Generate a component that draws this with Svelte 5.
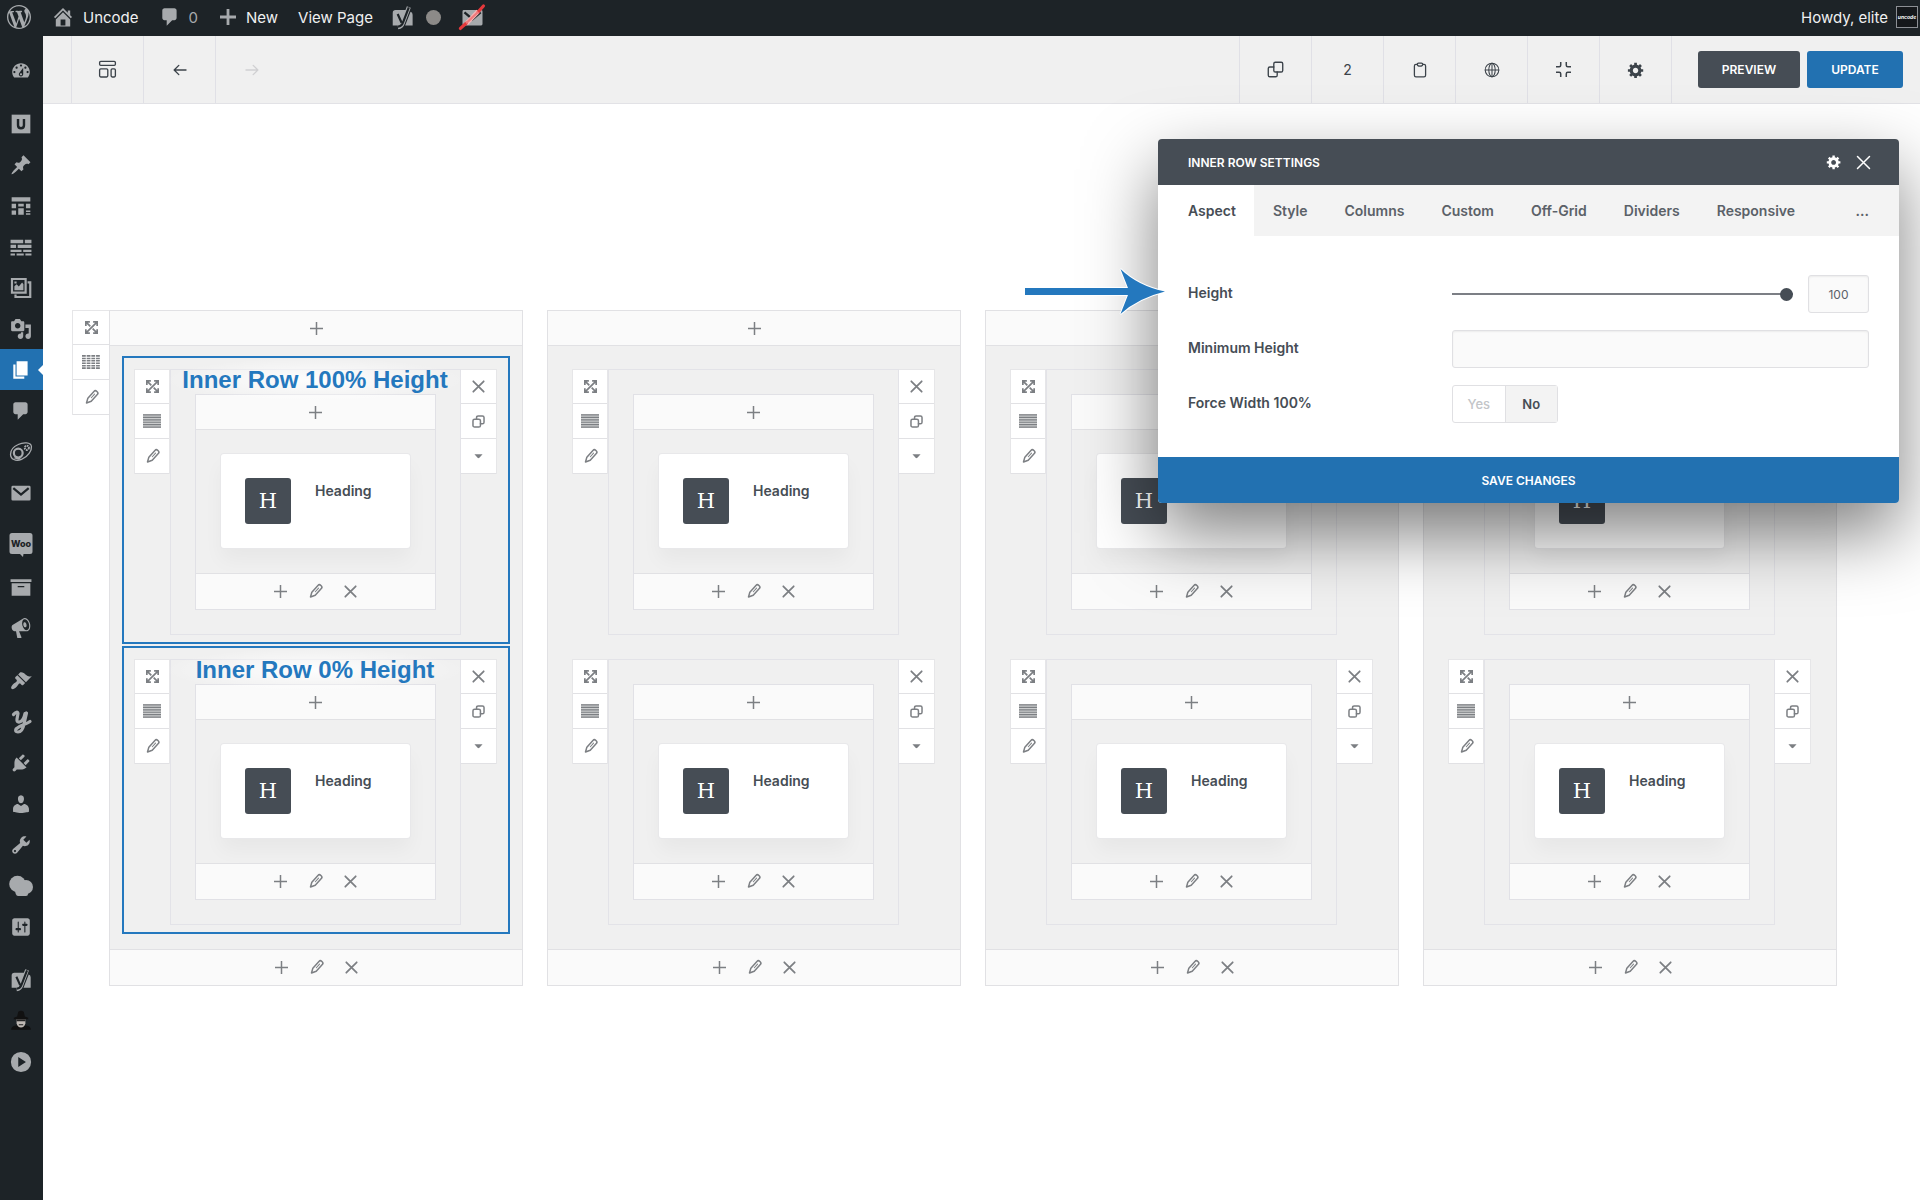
<script lang="ts">
  type Box = '20' | '24';
  interface Icon { box: Box; body: string; }

  const solid = (d: string): Icon => ({ box: '20', body: `<path fill="currentColor" fill-rule="evenodd" d="${d}"/>` });
  const line = (body: string, w = 1.6): Icon => ({
    box: '20',
    body: `<g fill="none" stroke="currentColor" stroke-width="${w}" stroke-linecap="round" stroke-linejoin="round">${body}</g>`,
  });

  const gear = 'M18 12h-2.18c-.17.7-.44 1.35-.81 1.93l1.54 1.54-2.1 2.1-1.54-1.54c-.58.36-1.23.63-1.91.79V19H8v-2.18c-.68-.16-1.33-.43-1.91-.79l-1.54 1.54-2.12-2.12 1.54-1.54c-.36-.58-.63-1.23-.79-1.91H1V9.03h2.17c.16-.7.44-1.35.8-1.94L2.43 5.55l2.1-2.1 1.54 1.54c.58-.37 1.24-.64 1.93-.81V2h3v2.18c.68.16 1.33.43 1.91.79l1.54-1.54 2.12 2.12-1.54 1.54c.36.59.64 1.24.8 1.94H18V12zm-8.5 1.5c1.66 0 3-1.34 3-3s-1.34-3-3-3-3 1.34-3 3 1.34 3 3 3z';
  const envelope = '<path fill="currentColor" d="M2.500 3.500h15q1.200 0 1.200 1.200v11q0 1.200-1.200 1.200h-15q-1.200 0-1.200-1.200v-11q0-1.200 1.200-1.200z"/><path fill="none" stroke="#1d2327" stroke-width="2" d="M3 5.500l7 6 7-6"/>';
  const yoast = '<path fill="currentColor" d="M4 3.500h9.500L9.500 17H1.500V6Q1.500 3.500 4 3.500zM17 5q1.800.5 1.800 2.500V17h-6.500z"/><path fill="none" stroke="currentColor" stroke-width="3.600" d="M15.500.8l-5 13.400q-1.200 3.800-4.500 4.200"/><path fill="none" stroke="#1d2327" stroke-width="1.900" d="M5.800 7l3.400 7.500M15.500 1.200l-5 13q-1.200 3.400-4.500 3.800"/>';

  const icons: Record<string, Icon> = {
    wordpress: solid('M20 10c0-5.51-4.49-10-10-10C4.48 0 0 4.49 0 10c0 5.52 4.48 10 10 10 5.51 0 10-4.48 10-10zM7.78 15.37L4.37 6.22c.55-.02 1.17-.08 1.17-.08.5-.06.44-1.13-.06-1.11 0 0-1.45.11-2.37.11-.18 0-.37 0-.58-.01C4.12 2.69 6.87 1.11 10 1.11c2.33 0 4.45.87 6.05 2.34-.68-.11-1.65.39-1.65 1.58 0 .74.45 1.36.9 2.1.35.61.55 1.36.55 2.46 0 1.49-1.4 5-1.4 5l-3.03-8.37c.54-.02.82-.17.82-.17.5-.05.44-1.25-.06-1.22 0 0-1.44.12-2.38.12-.87 0-2.33-.12-2.33-.12-.5-.03-.56 1.2-.06 1.22l.92.08 1.26 3.41zM17.41 10c.24-.64.74-1.87.43-4.25.7 1.29 1.05 2.71 1.05 4.25 0 3.29-1.73 6.24-4.4 7.78.97-2.59 1.94-5.2 2.92-7.78zM6.1 18.09C3.12 16.65 1.11 13.53 1.11 10c0-1.3.23-2.48.72-3.59C3.25 10.3 4.67 14.2 6.1 18.09zm4.03-6.63l2.58 6.98c-.86.29-1.76.45-2.71.45-.79 0-1.57-.11-2.29-.33.81-2.38 1.62-4.74 2.42-7.1z'),
    home: solid('M16 8.5l1.53 1.53-1.06 1.06L10 4.6l-6.47 6.49-1.06-1.06L10 2.5l4 4v-2h2v4zm-6-2.46l6 5.99V18H4v-5.97zM12 17v-5H8v5h4z'),
    comment: solid('M5 2h9c1.1 0 2 .9 2 2v7c0 1.1-.9 2-2 2h-2l-5 5v-5H5c-1.1 0-2-.9-2-2V4c0-1.1.9-2 2-2z'),
    add: solid('M18 8.600v2.800h-6.600V18H8.600v-6.600H2V8.600h6.600V2h2.800v6.600z'),
    yoast: { box: '20', body: yoast },
    mailOff: { box: '20', body: envelope + '<path stroke="#f6b5b6" stroke-width="3.800" d="M4.500 15.500l10.500-11"/><path stroke="#e5383b" stroke-width="2.800" stroke-linecap="round" d="M-.5 19.500L4.500 15M15 5L19.500 0"/><path stroke="#ef7a7c" stroke-width="2" d="M4.500 15L15 5"/>' },
    dashboard: solid('M3.76 16h12.48c1.1-1.37 1.76-3.11 1.76-5 0-4.42-3.58-8-8-8s-8 3.58-8 8c0 1.89.66 3.63 1.76 5zM10 4c.55 0 1 .45 1 1s-.45 1-1 1-1-.45-1-1 .45-1 1-1zM6 6c.55 0 1 .45 1 1s-.45 1-1 1-1-.45-1-1 .45-1 1-1zm8 0c.55 0 1 .45 1 1s-.45 1-1 1-1-.45-1-1 .45-1 1-1zm-5.37 5.55L12 7v6c0 1.1-.9 2-2 2s-2-.9-2-2c0-.57.24-1.08.63-1.45zM4 10c.55 0 1 .45 1 1s-.45 1-1 1-1-.45-1-1 .45-1 1-1zm12 0c.55 0 1 .45 1 1s-.45 1-1 1-1-.45-1-1 .45-1 1-1zm-5 3c0-.55-.45-1-1-1s-1 .45-1 1 .45 1 1 1 1-.45 1-1z'),
    uncode: { box: '20', body: '<path fill="currentColor" d="M1.500 1.500h17v17h-17z"/><path fill="none" stroke="#1d2327" stroke-width="2.200" d="M7.300 5.500v5.700q0 2.700 2.700 2.700t2.700-2.700V5.500"/>' },
    pin: solid('M10.44 3.02l1.82-1.82 6.36 6.35-1.83 1.82c-1.05-.68-2.48-.57-3.41.36l-.75.75c-.92.93-1.04 2.35-.35 3.41l-1.83 1.82-2.41-2.41-2.8 2.79c-.42.42-3.38 2.71-3.8 2.29s1.86-3.39 2.28-3.81l2.79-2.79L4.1 9.36l1.83-1.82c1.05.69 2.48.57 3.4-.36l.75-.75c.93-.92 1.05-2.35.36-3.41z'),
    grid: solid('M1.500 2h17v4h-17zM1.500 8h4v4h-4zM7.500 8h5v2.500h-5zM14.500 8h4v4h-4zM1.500 14h4v4h-4zM7.500 12h5v6h-5zM14.500 14h4v1.500h-4zM14.500 16.500h4V18h-4z'),
    bricks: solid('M.5 3.500h11.500v3H.5zM13.500 3.500h6v3h-6zM.5 8h5v3h-5zM7 8h12.500v3H7zM.5 12.500h10v2H.5zM12 12.500h7.500v2H12zM.5 16h4v1.800h-4zM6 16h6.500v1.800H6zM14 16h5.500v1.800H14z'),
    gallery: { box: '20', body: '<path fill="none" stroke="currentColor" stroke-width="2" d="M1.800 1.800h12.400v12.400H1.800zM16 4.800h2.400v13.400H5V16"/><path fill="currentColor" d="M4 12V8.500l2-1.800 2 2L11 5l1.200 1.500V12zM4 4h2v2H4z"/>' },
    media: solid('M13 11V4c0-.55-.45-1-1-1h-1.67L9 1H5L3.67 3H2c-.55 0-1 .45-1 1v7c0 .55.45 1 1 1h10c.55 0 1-.45 1-1zM7 4.5c1.38 0 2.5 1.12 2.5 2.5S8.38 9.5 7 9.5 4.5 8.38 4.5 7 5.62 4.5 7 4.5zM14 6h5v10.5c0 1.38-1.12 2.5-2.5 2.5S14 17.88 14 16.5s1.12-2.5 2.5-2.500c.17 0 .34.02.5.05V9h-3V6zm-4 8.05V13h2v3.5c0 1.380-1.120 2.500-2.500 2.500S7 17.880 7 16.500 8.120 14 9.500 14c.170 0 .340.020.500.050z'),
    pages: solid('M6 15V2h10v13H6zm-1 1h8v2H3V5h2v11z'),
    planet: { box: '20', body: '<g fill="none" stroke="currentColor"><path stroke-width="1.200" d="M7.500 3.200C12 1 19 1 19.500 5c.4 3.500-3 9.500-9 11.800C5 18.800.5 16.500.5 12c0-4 3-7 7-8.800z"/><circle cx="7.500" cy="11" r="4" stroke-width="2"/><circle cx="15.300" cy="6.200" r="1.900" stroke-width="1.800" stroke-dasharray="1.400 .6"/></g><path fill="currentColor" d="M3 15.500l3-1 4 1.500-2.500 1z"/>' },
    mail: { box: '20', body: envelope },
    woo: { box: '24', body: '<path fill="currentColor" d="M3-1h18q2.500 0 2.500 2.500v16q0 2.500-2.500 2.500h-6.500l-.5 3-3-3H3Q.5 20 .5 17.500v-16Q.5-1 3-1z"/><text x="12" y="13" text-anchor="middle" font-family="Inter, sans-serif" font-size="9" font-weight="800" fill="#1d2327">Woo</text>' },
    archive: solid('M.5 3h19v2.500H.5zM1.500 6.500h17V18h-17zM7 9v1.200h6V9z'),
    megaphone: solid('M18.15 5.94c.46 1.62.38 3.22-.02 4.48-.42 1.28-1.26 2.18-2.3 2.48-.16.06-.26.06-.4.06-.06.02-.12.02-.18.02-.06.02-.14.02-.22.02h-6.8l2.22 5.5c.02.14-.06.26-.14.34-.08.1-.24.16-.34.16H6.95c-.1 0-.26-.06-.34-.16-.08-.08-.16-.2-.14-.34l-1-5.5H4.25l-.02-.02c-.5.06-1.08-.18-1.54-.62s-.88-1.08-1.06-1.88c-.24-.8-.2-1.56-.02-2.2.18-.62.58-1.08 1.06-1.3l.02-.02 9-5.4c.1-.06.18-.1.24-.16.06-.04.14-.08.24-.12.16-.08.28-.12.5-.18 1.04-.3 2.24.1 3.22.98s1.84 2.24 2.26 3.86zm-2.58 5.98h-.02c.4-.1.74-.34 1.04-.7.58-.7.86-1.76.86-3.04 0-.64-.1-1.3-.28-1.98-.34-1.36-1.02-2.5-1.78-3.24s-1.68-1.1-2.46-.88c-.82.22-1.4.96-1.7 2-.32 1.04-.28 2.36.06 3.72.38 1.36 1 2.5 1.8 3.24.78.74 1.62 1.1 2.48.88zm-2.54-7.08c.22-.04.42-.02.62.04.38.16.76.48 1.02 1s.42 1.2.42 1.78c0 .3-.04.56-.12.8-.18.48-.44.84-.86.94-.34.1-.8-.06-1.14-.4s-.64-.86-.78-1.5c-.18-.62-.12-1.24.02-1.72s.48-.84.82-.94z'),
    brush: solid('M14.48 11.06L7.41 3.99l1.5-1.5c.5-.56 2.3-.47 3.51.32 1.21.8 1.43 1.28 2.91 2.1 1.18.64 2.45 1.26 4.45.85zm-.71.71L6.7 4.7 4.93 6.47c-.39.39-.39 1.02 0 1.41l1.06 1.06c.39.39.39 1.03 0 1.42-.6.6-1.43 1.11-2.21 1.69-.35.26-.7.53-1.01.84C1.43 14.23.4 16.08 1.4 17.07c.99 1 2.84-.03 4.18-1.36.31-.31.58-.66.85-1.02.57-.78 1.08-1.61 1.69-2.21.39-.39 1.02-.39 1.41 0l1.06 1.06c.39.39 1.02.39 1.41 0z'),
    script: { box: '24', body: '<g fill="none" stroke="currentColor" stroke-width="3.200" stroke-linecap="round" stroke-linejoin="round"><path d="M4.500 4.500Q8.500.5 9 3.500L8 9q-.5 3.500 2.500 3 4-1 5.500-8.500M17.500 3L15 14q-1.500 8-6 8-3.500-.3-2-3 2.500-2.500 8-4.500 4-1.500 6-3"/></g>' },
    plug: solid('M13.11 4.36L9.87 7.6 8 5.73l3.24-3.24c.35-.34 1.05-.2 1.56.32.52.51.66 1.21.31 1.55zm-8 1.77l.91-1.12 9.01 9.01-1.19.84c-.71.71-2.63 1.16-3.82 1.16H6.14L4.9 17.26c-.59.59-1.54.59-2.12 0-.59-.58-.59-1.53 0-2.12l1.24-1.24v-3.88c0-1.13.4-3.19 1.09-3.89zm7.26 3.97l3.24-3.24c.34-.35 1.04-.21 1.55.31.52.51.66 1.21.31 1.55l-3.24 3.25z'),
    user: solid('M10 9.25c-2.27 0-2.73-3.44-2.73-3.44C7 4.02 7.82 2 9.97 2c2.16 0 2.98 2.02 2.71 3.81 0 0-.41 3.44-2.68 3.44zm0 2.57L12.72 10c2.39 0 4.52 2.33 4.52 4.53v2.49s-3.65 1.13-7.24 1.13c-3.65 0-7.24-1.13-7.24-1.13v-2.49c0-2.25 1.94-4.48 4.47-4.48z'),
    wrench: solid('M16.68 9.77c-1.34 1.34-3.3 1.67-4.95.99l-5.41 6.52c-.99.99-2.59.99-3.58 0s-.99-2.59 0-3.57l6.52-5.42c-.68-1.65-.35-3.61.99-4.95 1.28-1.28 3.12-1.62 4.72-1.06l-2.89 2.89 2.82 2.82 2.86-2.87c.53 1.58.18 3.39-1.08 4.65zM3.81 16.21c.4.39 1.04.39 1.43 0 .4-.4.4-1.04 0-1.43-.39-.4-1.03-.4-1.43 0-.39.39-.39 1.03 0 1.43z'),
    cloud: { box: '24', body: '<g fill="currentColor"><circle cx="8.500" cy="10" r="8.300"/><circle cx="17" cy="13" r="7"/><path d="M6 14h13v6q0 2-2 2H9q-3 0-3-8z"/></g>' },
    settings: solid('M18 16V4c0-1.1-.9-2-2-2H4c-1.1 0-2 .9-2 2v12c0 1.1.9 2 2 2h12c1.1 0 2-.9 2-2zM8 11h1c.55 0 1 .45 1 1s-.45 1-1 1H8v1.5c0 .28-.22.5-.5.5s-.5-.22-.5-.5V13H6c-.55 0-1-.45-1-1s.45-1 1-1h1V5.5c0-.28.22-.5.5-.5s.5.22.5.5V11zm5-2h-1c-.55 0-1-.45-1-1s.45-1 1-1h1V5.5c0-.28.22-.5.5-.5s.5.22.5.5V7h1c.55 0 1 .45 1 1s-.45 1-1 1h-1v5.5c0 .28-.22.5-.5.5s-.5-.22-.5-.5V9z'),
    agent: { box: '20', body: '<path fill="#111" d="M6.500 6L7.500 1.500q2.500-1.500 5 0L13.500 6l3 1v1.500h-13V7zM1 18q0-3.500 4-4h10q4 .5 4 4z"/><path fill="#bfb9b4" d="M6 8.500h8V12q-1 4-4 4t-4-4z"/><path fill="#222" d="M6 8.500h8v1.800H6zM8 13h4v.8H8z"/>' },
    play: solid('M10 .8a9.200 9.200 0 1 0 0 18.400A9.200 9.200 0 1 0 10 .8zM7.500 5.500l7 4.500-7 4.500z'),

    layout: line('<rect x="1.700" y="1.500" width="16.600" height="4.200" rx="1.200"/><rect x="1.700" y="9.300" width="8.600" height="8.600" rx="1.200"/><rect x="13.800" y="9.300" width="4.500" height="8.600" rx="1.200"/>', 1.4),
    back: line('<path d="M17.500 10H3M8.500 4.200L2.700 10l5.800 5.800"/>', 1.7),
    forward: line('<path d="M2.500 10H17M11.500 4.200l5.800 5.800-5.800 5.800"/>', 1.7),
    clone: line('<rect x="8" y="1.500" width="10.500" height="11.500" rx="1.800"/><path d="M8 7H3.300q-1.800 0-1.800 1.800v7.900q0 1.800 1.800 1.800h6.900q1.800 0 1.800-1.800V13"/>', 1.6),
    clipboard: line('<path d="M6.500 3H5Q3 3 3 5v11.500q0 2 2 2h10q2 0 2-2V5q0-2-2-2h-1.500M6.500 3q0-1.700 1.700-1.700h3.600q1.700 0 1.700 1.700-.3 2.200-3.500 2.200T6.500 3z"/>', 1.6),
    globe: line('<circle cx="10" cy="10" r="8.500"/><ellipse cx="10" cy="10" rx="4" ry="8.500"/><path d="M1.500 10h17M10 1.500v17"/>', 1.3),
    compress: { box: '20', body: '<path fill="none" stroke="currentColor" stroke-width="2" d="M6.300 0v4.300q0 2-2 2H0M13.700 0v4.300q0 2 2 2H20M6.300 20v-4.300q0-2-2-2H0M13.700 20v-4.300q0-2 2-2H20"/>' },
    gear: { box: '20', body: `<path fill="currentColor" fill-rule="evenodd" d="${gear}"/>` },

    expand: { box: '20', body: '<path fill="none" stroke="currentColor" stroke-width="2.600" d="M2 2l6.200 6.200M18 2L2 18M11.800 11.800L18 18M1.300 7.500V1.300h6.200M12.500 1.300h6.200v6.200M18.700 12.500v6.200h-6.200M7.500 18.700H1.300v-6.200"/>' },
    pencil: { box: '20', body: '<g transform="rotate(42 10 10)" fill="none" stroke="currentColor" stroke-linejoin="round" stroke-linecap="round"><path stroke-width="2.300" d="M6.500 0q0-2.500 3.500-2.500T13.500 0v14.500L10 21.500l-3.500-7z"/><path stroke-width="1.500" d="M10 3v7.500"/></g>' },
    plus: { box: '20', body: '<path stroke="currentColor" stroke-width="2.300" d="M0 10h20M10 0v20"/>' },
    close: line('<path d="M2 2l16 16M18 2L2 18"/>', 2.7),
    closeThin: line('<path d="M2 2l16 16M18 2L2 18"/>', 2),
    copy: line('<rect x="1.500" y="6.500" width="11.500" height="12" rx="2.500"/><path d="M7 6V4q0-2.500 2.500-2.500H16q2.500 0 2.500 2.500v7q0 2.500-2.500 2.500h-3"/>', 2.3),
    caret: solid('M1 5h18l-7 8q-2 1.500-4 0z'),
    // column layouts: one striped block, or four of them
    rows1: { box: '20', body: '<path fill="currentColor" fill-opacity=".4" d="M0 2.500h20v15H0z"/><path fill="none" stroke="currentColor" stroke-width="1.300" d="M0 3.200h20M0 6h20M0 8.700h20M0 11.400h20M0 14.100h20M0 16.800h20"/>' },
    rows4: { box: '20', body: '<path fill="none" stroke="currentColor" stroke-width="1.700" stroke-dasharray="4.200 1" d="M0 3.200h20M0 6h20M0 8.700h20M0 11.400h20M0 14.100h20M0 16.800h20"/>' },
  };

  const menu = [
    ['dashboard'],
    ['uncode', 'pin', 'grid', 'bricks', 'gallery', 'media', 'pages', 'comment', 'planet', 'mail'],
    ['woo', 'archive', 'megaphone'],
    ['brush', 'script', 'plug', 'user', 'wrench', 'cloud', 'settings'],
    ['yoast', 'agent', 'play'],
  ];

  const tabs = ['Aspect', 'Style', 'Columns', 'Custom', 'Off-Grid', 'Dividers', 'Responsive'];

  const columns = [
    ['Inner Row 100% Height', 'Inner Row 0% Height'],
    ['', ''],
    ['', ''],
    ['', ''],
  ];

  let activeMenu = 'pages';
  let activeTab = 'Aspect';
  let height = 100;
  let minHeight = '';
  let forceWidth = 'no';
</script>

{#snippet icon(name: string, size: number)}
  <svg width={size} height={size} viewBox="0 0 {icons[name].box} {icons[name].box}" overflow="visible" aria-hidden="true">
    {@html icons[name].body}
  </svg>
{/snippet}

{#snippet tools()}
  <div class="bar bottom">
    <button aria-label="Add">{@render icon('plus', 13)}</button>
    <button aria-label="Edit">{@render icon('pencil', 13)}</button>
    <button aria-label="Delete">{@render icon('close', 13)}</button>
  </div>
{/snippet}

<header class="adminbar">
  <a href="#wp" class="wp" aria-label="WordPress">{@render icon('wordpress', 24)}</a>
  <a href="#home">{@render icon('home', 24)}<span>Uncode</span></a>
  <a href="#comments" class="dim">{@render icon('comment', 22)}<span>0</span></a>
  <a href="#new">{@render icon('add', 20)}<span>New</span></a>
  <a href="#view"><span>View Page</span></a>
  <a href="#seo" class="seo" aria-label="SEO">{@render icon('yoast', 23)}<i class="dot"></i></a>
  <a href="#mail" aria-label="Mail disabled">{@render icon('mailOff', 23)}</a>
  <a href="#profile" class="howdy"><span>Howdy, elite</span><i class="avatar">uncode</i></a>
</header>

<div class="layout">
  <nav class="sidebar" aria-label="Admin menu">
    {#each menu as group}
      <div class="group">
        {#each group as name}
          <a href="#{name}" class:active={activeMenu === name} aria-label={name}
             on:click|preventDefault={() => (activeMenu = name)}>
            {@render icon(name, name === 'woo' || name === 'cloud' || name === 'script' ? 24 : 22)}
          </a>
        {/each}
      </div>
    {/each}
  </nav>

  <main>
    <div class="toolbar">
      <span class="stub"></span>
      <button class="cell" aria-label="Layouts">{@render icon('layout', 19)}</button>
      <button class="cell" aria-label="Undo">{@render icon('back', 16)}</button>
      <button class="cell" aria-label="Redo" disabled>{@render icon('forward', 16)}</button>
      <div class="right">
        <button class="cell" aria-label="Clone">{@render icon('clone', 17)}</button>
        <button class="cell">2</button>
        <button class="cell" aria-label="Clipboard">{@render icon('clipboard', 16)}</button>
        <button class="cell" aria-label="Language">{@render icon('globe', 16)}</button>
        <button class="cell" aria-label="Compress">{@render icon('compress', 15)}</button>
        <button class="cell" aria-label="Settings">{@render icon('gear', 18)}</button>
      </div>
      <button class="btn dark">PREVIEW</button>
      <button class="btn blue">UPDATE</button>
    </div>

    <div class="row">
      <div class="handle outer">
        <button aria-label="Move row">{@render icon('expand', 13)}</button>
        <button aria-label="Row layout">{@render icon('rows4', 18)}</button>
        <button aria-label="Edit row">{@render icon('pencil', 13)}</button>
      </div>

      <div class="columns">
        {#each columns as col}
          <section class="column">
            <div class="bar"><button aria-label="Add">{@render icon('plus', 13)}</button></div>
            <div class="rows">
              {#each col as label}
                <div class="inner-row">
                  <div class="handle">
                    <button aria-label="Move inner row">{@render icon('expand', 13)}</button>
                    <button aria-label="Inner row layout">{@render icon('rows1', 18)}</button>
                    <button aria-label="Edit inner row">{@render icon('pencil', 13)}</button>
                  </div>
                  <div class="frame">
                    <div class="inner-column">
                      <div class="bar"><button aria-label="Add">{@render icon('plus', 13)}</button></div>
                      <div class="drop">
                        <article class="card">
                          <span class="tile">H</span>
                          <h3>Heading</h3>
                        </article>
                      </div>
                      {@render tools()}
                    </div>
                  </div>
                  <div class="handle end">
                    <button aria-label="Remove">{@render icon('close', 13)}</button>
                    <button aria-label="Duplicate">{@render icon('copy', 13)}</button>
                    <button aria-label="More">{@render icon('caret', 9)}</button>
                  </div>
                  {#if label}
                    <div class="mark"><strong>{label}</strong></div>
                  {/if}
                </div>
              {/each}
            </div>
            {@render tools()}
          </section>
        {/each}
      </div>
    </div>
  </main>
</div>

<!-- Settings window -->
<div class="modal" role="dialog" aria-labelledby="modal-title">
  <div class="modal-head">
    <h2 id="modal-title">INNER ROW SETTINGS</h2>
    <button aria-label="Options">{@render icon('gear', 16)}</button>
    <button aria-label="Close">{@render icon('closeThin', 15)}</button>
  </div>
  <div class="tabs" role="tablist">
    {#each tabs as tab}
      <button role="tab" aria-selected={activeTab === tab} class:active={activeTab === tab}
              on:click={() => (activeTab = tab)}>{tab}</button>
    {/each}
    <button class="more" aria-label="More tabs">...</button>
  </div>
  <div class="fields">
    <label for="height">Height</label>
    <div class="control">
      <input id="height" type="range" min="0" max="100" bind:value={height} />
      <input class="num" type="text" aria-label="Height value" bind:value={height} />
    </div>

    <label for="min-height">Minimum Height</label>
    <input id="min-height" class="text" type="text" bind:value={minHeight} />

    <span id="force-label">Force Width 100%</span>
    <div class="switch" role="radiogroup" aria-labelledby="force-label">
      <label class:on={forceWidth === 'yes'}><input type="radio" name="force" value="yes" bind:group={forceWidth} />Yes</label>
      <label class:on={forceWidth === 'no'}><input type="radio" name="force" value="no" bind:group={forceWidth} />No</label>
    </div>
  </div>
  <button class="save">SAVE CHANGES</button>

  <svg class="arrow" width="140" height="46" viewBox="0 0 140 46" aria-hidden="true">
    <path d="M0 19h103L95.500 0Q113 17 140 22.500 113 29 95.500 45L103 26H0z" fill="#2478be" stroke="#fff" stroke-width="2" paint-order="stroke" />
  </svg>
</div>

<style>
  :global(body) { background: #fff; }
  :global(#app) { position: relative; font-family: Inter, sans-serif; color: #464d55; }
  :global(#app *) { box-sizing: border-box; }

  button { border: 0; padding: 0; background: none; font: inherit; color: inherit; cursor: pointer; }
  a { color: inherit; text-decoration: none; }
  svg { display: block; flex: none; }
  h2, h3 { margin: 0; }

  /* Admin bar */
  .adminbar {
    display: flex; align-items: center; gap: 20px; height: 36px; padding: 0 2px 2px 7px;
    background: #1d2327; color: #a7aaad; font-size: 15px;
  }
  .adminbar a { display: flex; align-items: center; gap: 8px; }
  .adminbar span { color: #f0f0f1; }
  .adminbar .dim span { color: #a7aaad; }
  .adminbar .seo { margin-left: -2px; }
  .adminbar .howdy { margin-left: auto; }
  .dot { width: 15px; height: 15px; margin-left: 4px; border-radius: 50%; background: #8c8a88; }
  .avatar {
    display: flex; align-items: center; justify-content: center; width: 22px; height: 22px;
    border: 1px solid #8c8f94; background: #15181b; color: #fff; font-size: 5px; font-weight: 700;
  }

  .layout { display: flex; min-height: calc(100vh - 36px); }
  .sidebar {
    display: flex; flex-direction: column; gap: 12px; flex: 0 0 43px; padding-top: 14px;
    background: #1d2327; color: #a7aaad;
  }
  .sidebar a { position: relative; display: flex; align-items: center; justify-content: center; height: 41px; padding-right: 2px; }
  .sidebar a.active { background: #2271b1; color: #fff; }
  .sidebar a.active::after {
    content: ''; position: absolute; right: 0; top: 50%; margin-top: -5px;
    border: 5px solid transparent; border-left: 0; border-right-color: #fff;
  }
  main { flex: 1; min-width: 0; }

  /* Toolbar */
  .toolbar {
    display: flex; align-items: center; height: 68px; padding-right: 17px;
    background: #f0f0f0; border-bottom: 1px solid #e2e2e6; color: #3c434a; font-size: 14px;
  }
  .stub { width: 28px; }
  .cell {
    display: flex; align-items: center; justify-content: center; width: 72px; height: 67px;
    border-left: 1px solid #e0e0e6;
  }
  .cell:disabled { color: #d0d0d2; }
  .right { display: flex; margin: 0 26px 0 auto; border-right: 1px solid #e0e0e6; }
  .btn {
    height: 37px; border-radius: 3px; color: #fff; font-size: 12px; font-weight: 600;
  }
  .btn.dark { width: 102px; margin-right: 7px; background: #464d55; }
  .btn.blue { width: 96px; background: #2271b1; }

  /* Builder */
  .row { display: flex; align-items: flex-start; padding: 206px 83px 80px 29px; color: #7c7f83; }
  .columns { flex: 1; display: grid; grid-template-columns: repeat(4, 1fr); gap: 24px; }
  .column { background: #f0f0f0; border: 1px solid #e1e1e4; }

  .bar { display: flex; align-items: center; justify-content: center; height: 35px; background: #fafafa; border-bottom: 1px solid #e1e1e4; }
  .bar.bottom { height: 36px; border-bottom: 0; border-top: 1px solid #e1e1e4; }
  .bar button { display: flex; align-items: center; justify-content: center; width: 35px; height: 34px; }

  .handle { display: flex; flex-direction: column; align-self: flex-start; width: 36px; background: #fff; border: 1px solid #e6e6e8; border-width: 1px 1px 0; }
  .handle button { display: flex; align-items: center; justify-content: center; height: 35px; border-bottom: 1px solid #e1e1e4; }
  .handle button:first-child { height: 34px; }
  .handle.outer { width: 37px; border-right: 0; }
  .handle.end { border-left: 0; }

  .rows { display: flex; flex-direction: column; gap: 24px; padding: 23px 25px 24px 24px; }
  .inner-row { position: relative; display: flex; }
  .frame { flex: 1; padding: 24px; border: 1px solid #e3e3e8; }
  .inner-column { border: 1px solid #e1e1e6; }
  .drop { padding: 24px 25px 25px; }
  .card {
    display: flex; align-items: flex-start; gap: 24px; padding: 24px; border-radius: 3px;
    background: #fff; box-shadow: 0 0 0 1px #e8e8ea, 0 12px 20px rgba(0, 0, 0, 0.04);
  }
  .tile {
    display: flex; align-items: center; justify-content: center; width: 46px; height: 46px;
    border-radius: 3px; background: #464d55; color: #fff; font: 21px "DejaVu Serif", serif;
  }
  .card h3 { color: #464d55; font-size: 14px; line-height: 25px; font-weight: 600; }

  /* Highlighted inner rows */
  .mark { position: absolute; inset: -13px -13px -9px -12px; border: 2px solid #2478be; text-align: center; pointer-events: none; }
  .mark strong {
    display: block; margin: 0 42px 0 40px; padding: 8px 0;
    background: radial-gradient(closest-side, rgba(255, 255, 255, 0.9), rgba(255, 255, 255, 0));
    color: #2478be; font: bold 24px/28px "Liberation Sans", Arial, sans-serif; white-space: nowrap;
  }

  /* Modal */
  .modal {
    position: absolute; top: 139px; right: 21px; width: 741px; border-radius: 4px;
    background: #fff; box-shadow: 0 30px 70px rgba(0, 0, 0, 0.5);
  }
  .modal-head {
    display: flex; align-items: center; gap: 14px; height: 46px; padding: 0 28px 0 30px;
    background: #464d55; border-radius: 4px 4px 0 0; color: #fff;
  }
  .modal-head h2 { flex: 1; font-size: 12px; font-weight: 600; }
  .tabs { display: flex; gap: 1px; height: 51px; background: #f3f3f3; color: #5b6168; font-size: 14px; font-weight: 600; }
  .tabs button { padding: 0 18px; }
  .tabs button:first-child { padding-left: 30px; }
  .tabs .active { background: #fff; color: #464d55; }
  .tabs .more { margin-left: auto; padding-right: 30px; }
  .fields {
    display: grid; grid-template-columns: 264px 1fr; row-gap: 17px; align-items: center;
    padding: 39px 30px 34px; font-size: 14px; font-weight: 600;
  }
  .fields > label, .fields > span { padding-bottom: 3px; }
  .control { display: flex; align-items: center; gap: 15px; }
  input[type='range'] { appearance: none; flex: 1; min-width: 0; height: 14px; margin: 0; background: linear-gradient(#7c7f85, #7c7f85) center / 100% 2px no-repeat; }
  input[type='range']::-webkit-slider-thumb { appearance: none; width: 13px; height: 13px; border-radius: 50%; background: #464d55; }
  .num, .text {
    height: 38px; border: 1px solid #e0e0e3; border-radius: 3px; background: #fafafa;
    box-shadow: inset 0 1px 2px rgba(0, 0, 0, 0.06); color: #5b6168; font: 12px Inter, sans-serif;
  }
  .num { width: 61px; text-align: center; }
  .text { width: 100%; padding: 0 12px; }
  .switch { display: flex; width: 106px; height: 38px; border: 1px solid #e0e0e3; border-radius: 3px; font-size: 13px; font-weight: 500; }
  .switch label { flex: 1; display: flex; align-items: center; justify-content: center; color: #c3c5c8; cursor: pointer; }
  .switch label + label { border-left: 1px solid #e0e0e3; }
  .switch .on { background: #f3f3f3; color: #464d55; font-weight: 600; }
  .switch input { position: absolute; opacity: 0; pointer-events: none; }
  .save { display: block; width: 100%; height: 46px; border-radius: 0 0 4px 4px; background: #2271b1; color: #fff; font-size: 12px; font-weight: 600; }
  .arrow { position: absolute; left: -133px; top: 130px; overflow: visible; }
</style>
